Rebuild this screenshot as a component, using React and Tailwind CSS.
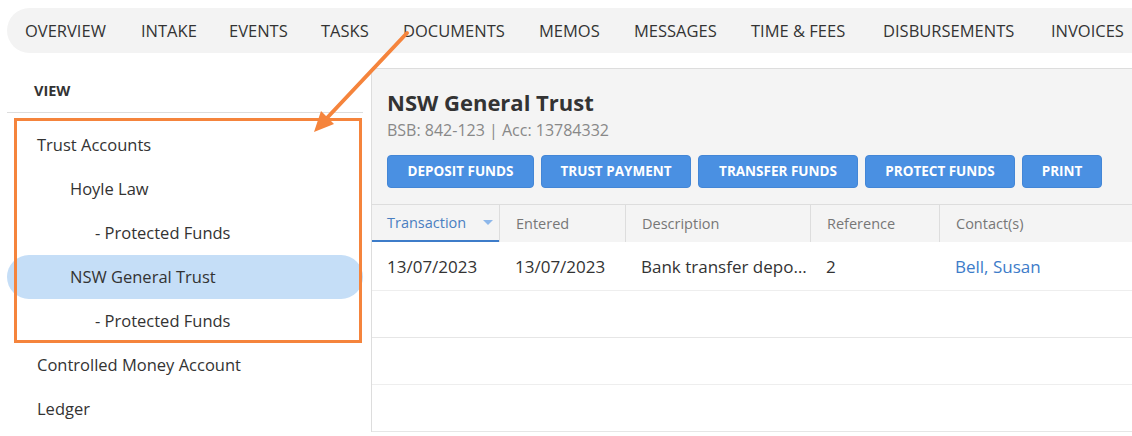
import React from "react";

const tabs = [
  { label: "OVERVIEW", w: "w-[116px]" },
  { label: "INTAKE", w: "w-[88px]" },
  { label: "EVENTS", w: "w-[92px]" },
  { label: "TASKS", w: "w-[82px]" },
  { label: "DOCUMENTS", w: "w-[136px]" },
  { label: "MEMOS", w: "w-[95px]" },
  { label: "MESSAGES", w: "w-[117px]" },
  { label: "TIME & FEES", w: "w-[132px]" },
  { label: "DISBURSEMENTS", w: "w-[168px]" },
  { label: "INVOICES", w: "w-[100px]" },
];

const accounts = [
  { label: "Trust Accounts", indent: "pl-[30px]" },
  { label: "Hoyle Law", indent: "pl-[63px]" },
  { label: "- Protected Funds", indent: "pl-[88px]" },
  { label: "NSW General Trust", indent: "pl-[63px]", active: true },
  { label: "- Protected Funds", indent: "pl-[88px]" },
  { label: "Controlled Money Account", indent: "pl-[30px]" },
  { label: "Ledger", indent: "pl-[30px]" },
];

const actions = [
  { label: "DEPOSIT FUNDS", w: "w-[147px]" },
  { label: "TRUST PAYMENT", w: "w-[150px]" },
  { label: "TRANSFER FUNDS", w: "w-[160px]" },
  { label: "PROTECT FUNDS", w: "w-[150px]" },
  { label: "PRINT", w: "w-[80px]" },
];

export default function App() {
  return (
    <div
      className="relative w-[1132px] h-[436px] overflow-hidden bg-white text-[#333]"
      style={{ fontFamily: '"Segoe UI", "Open Sans", sans-serif' }}
    >
      {/* Tabs */}
      <div className="mt-2 ml-[7px] h-[45px] rounded-l-full bg-[#f3f3f3] flex items-center pt-[2px] pl-[18px] whitespace-nowrap">
        {tabs.map((t) => (
          <span key={t.label} className={`${t.w} shrink-0 text-[16.5px] text-[#333]`}>
            {t.label}
          </span>
        ))}
      </div>

      <div className="flex">
        {/* Sidebar */}
        <div className="w-[371px] pl-[7px] pr-[8px] shrink-0">
          <div className="h-[60px] border-b border-[#ddd] flex items-end pb-[10px] pl-[27px]">
            <span className="text-[14.5px] font-bold text-[#333]">VIEW</span>
          </div>
          <div className="mt-[10px]">
            {accounts.map((a, i) => (
              <div
                key={i}
                className={`h-[44px] flex items-center text-[16.5px] ${a.indent} ${
                  a.active ? "bg-[#c5def7] rounded-full" : ""
                }`}
              >
                {a.label}
              </div>
            ))}
          </div>
        </div>

        {/* Account panel */}
        <div className="flex-1 mt-[15px] border-t border-l border-[#ddd] rounded-tl-md bg-[#f4f4f4] min-w-0">
          <div className="pl-[15px] pt-[18px]">
            <h1 className="text-[22px] font-bold leading-[30px] text-[#333]">NSW General Trust</h1>
            <p className="mt-[2px] text-[16px] leading-[22px] text-[#888]">BSB: 842-123 | Acc: 13784332</p>
            <div className="mt-[14px] mb-[16px] flex gap-[7px]">
              {actions.map((b) => (
                <button
                  key={b.label}
                  className={`${b.w} h-[33px] flex items-center justify-center rounded-[4px] bg-[#4a90e2] border border-[#4386d6] text-white text-[13.5px] font-bold whitespace-nowrap`}
                >
                  {b.label}
                </button>
              ))}
            </div>
          </div>

          <div className="border-t border-[#ddd]">
            <div className="h-[37px] flex text-[14.5px] text-[#777]">
              <div className="w-[127px] border-b-2 border-[#3d7cc9] flex items-center pl-[15px] pr-[6px] text-[#4a7fc1]">
                <span className="flex-1">Transaction</span>
                <svg width="10" height="6" viewBox="0 0 10 6">
                  <path d="M0 0h10L5 5z" fill="#8db7ea" />
                </svg>
              </div>
              <div className="w-[126px] border-l border-[#ddd] flex items-center pl-[16px]">Entered</div>
              <div className="w-[185px] border-l border-[#ddd] flex items-center pl-[16px]">Description</div>
              <div className="w-[129px] border-l border-[#ddd] flex items-center pl-[16px]">Reference</div>
              <div className="flex-1 border-l border-[#ddd] flex items-center pl-[16px]">Contact(s)</div>
            </div>
            <div className="bg-white">
              <div className="h-[49px] flex items-center pt-[2px] text-[17px] text-[#333] border-b border-[#eee]">
                <div className="w-[127px] pl-[15px]">13/07/2023</div>
                <div className="w-[126px] pl-[16px]">13/07/2023</div>
                <div className="w-[185px] pl-[16px] pr-[3px] truncate">Bank transfer deposit</div>
                <div className="w-[129px] pl-[16px]">2</div>
                <div className="flex-1 pl-[16px] text-[#3d7cc9]">Bell, Susan</div>
              </div>
              <div className="h-[47px] border-b border-[#e6e6e6]" />
              <div className="h-[47px] border-b border-[#eee]" />
              <div className="h-[47px] border-b border-[#e6e6e6]" />
            </div>
          </div>
        </div>
      </div>

      {/* Annotation: highlight box */}
      <div className="absolute left-[14px] top-[118px] w-[348px] h-[225px] border-[3px] border-[#f5843c] pointer-events-none" />

      {/* Annotation: arrow */}
      <svg className="absolute left-0 top-0 pointer-events-none" width="1132" height="436">
        <line x1="407" y1="33" x2="326" y2="119" stroke="#f5843c" strokeWidth="4" strokeLinecap="round" />
        <polygon points="314,132 334,124 321,111" fill="#f5843c" />
      </svg>
    </div>
  );
}
